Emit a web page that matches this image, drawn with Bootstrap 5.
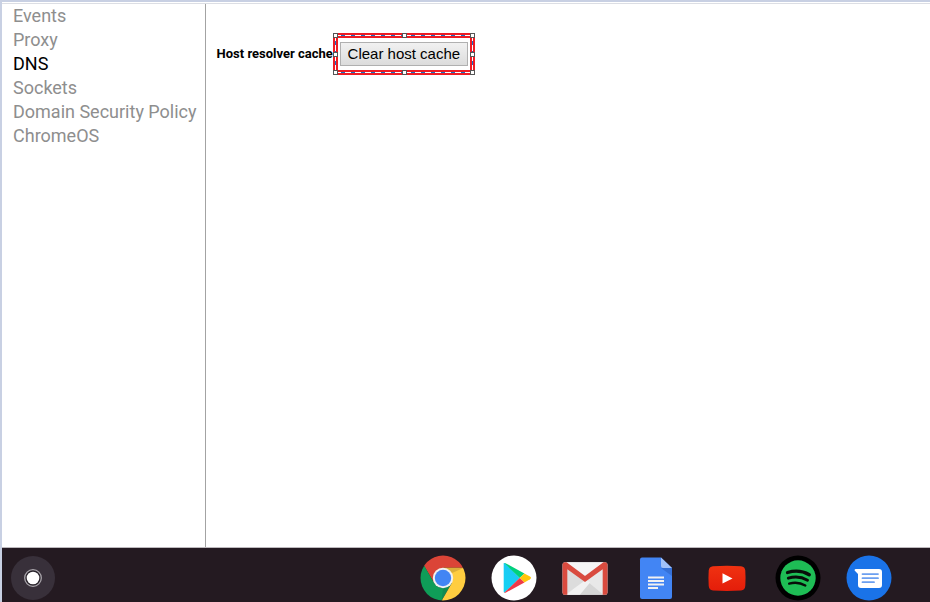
<!DOCTYPE html>
<html lang="en">
<head>
<meta charset="utf-8">
<meta name="viewport" content="width=device-width, initial-scale=1">
<title>DNS</title>
<link href="https://cdn.jsdelivr.net/npm/bootstrap@5.3.0/dist/css/bootstrap.min.css" rel="stylesheet">
<style>
body { font-family: Roboto, "Liberation Sans", sans-serif; border-left: 2px solid #c8d0e3; border-top: 2px solid #c8d0e3; background: #fff; }
.workspace { border-top: 1px solid #fff; }
.workspace-inner { border-top: 1px solid #dcdee4; }
.side { border-right: 1px solid #a3a3a3; padding: 0 8px 0 11px; }
.side .nav-link { padding: 0; font-size: 18px; line-height: 24px; color: #8e8e8e; white-space: nowrap; }
.side .nav-link.active { color: #000; }
.content { padding: 29px 11px; }
.host-label { font-size: 13px; line-height: 20px; font-weight: 700; color: #000; width: 116px; white-space: nowrap; }
.marquee { border: 5px solid #ed1c24; padding: 4px 2px; }
.clear-btn { font-family: "Liberation Sans", Arial, sans-serif; font-size: 15px; line-height: 22px; color: #000; padding: 0 7px; border: 1px solid #b0b0b0; border-radius: 0; background: linear-gradient(#f1f1f1, #dcdcdc); white-space: nowrap; }
.dashes {
  --h: repeating-linear-gradient(90deg, #fff 0 6px, #176fc8 6px 10px);
  --v: repeating-linear-gradient(#fff 0 6px, #176fc8 6px 10px);
  position: absolute; inset: -3px; pointer-events: none;
  background: var(--h) top / 100% 1px no-repeat, var(--h) bottom / 100% 1px no-repeat, var(--v) left / 1px 100% no-repeat, var(--v) right / 1px 100% no-repeat;
}
.knob { position: absolute; width: 5px; height: 5px; background: #fff; border: 1px solid #555; }
.l { left: -2px; } .c { left: calc(50% - 2px); } .r { right: -2px; }
.t { top: -2px; } .m { top: calc(50% - 2px); } .b { bottom: -2px; }
.shelf { background: #241a21; border-top: 1px solid #bdb9bd; padding: 7px 0 1px 8px; }
.apps { gap: 25px; padding-right: 38px; }
.app { padding: 0; border: 0; background: none; line-height: 0; border-radius: 0; }
.app svg { width: 46px; height: 46px; }
</style>
<script src="https://cdn.jsdelivr.net/npm/bootstrap@5.3.0/dist/js/bootstrap.bundle.min.js"></script>
</head>
<body class="min-vh-100 d-flex flex-column">
<div class="workspace flex-grow-1 d-flex">
<div class="workspace-inner flex-grow-1 d-flex">
  <nav class="side" aria-label="Sections">
    <div class="nav flex-column">
      <a class="nav-link" href="#events">Events</a>
      <a class="nav-link" href="#proxy">Proxy</a>
      <a class="nav-link active" href="#dns" aria-current="page">DNS</a>
      <a class="nav-link" href="#sockets">Sockets</a>
      <a class="nav-link" href="#policy">Domain Security Policy</a>
      <a class="nav-link" href="#chromeos">ChromeOS</a>
    </div>
  </nav>
  <main class="content flex-grow-1">
    <div class="d-flex align-items-center">
      <span class="host-label" id="hostLabel">Host resolver cache</span>
      <div class="marquee position-relative bg-white">
        <button type="button" class="clear-btn d-block" aria-describedby="hostLabel">Clear host cache</button>
        <div class="dashes">
          <i class="knob l t"></i><i class="knob c t"></i><i class="knob r t"></i>
          <i class="knob l m"></i><i class="knob r m"></i>
          <i class="knob l b"></i><i class="knob c b"></i><i class="knob r b"></i>
        </div>
      </div>
    </div>
  </main>
</div>
</div>
<footer class="shelf d-flex justify-content-between">
  <button type="button" class="app" aria-label="Launcher"><svg viewBox="0 0 46 46"><circle cx="23" cy="23" r="22" fill="#38303a"/><circle cx="23" cy="23" r="8.3" fill="#29232b" stroke="#a9a5ab" stroke-width="1.3"/><circle cx="23" cy="23" r="6.3" fill="#fff"/></svg></button>
  <div class="apps d-flex">
    <button type="button" class="app" aria-label="Chrome"><svg viewBox="0 0 46 46">
      <defs><clipPath id="cc"><circle cx="23" cy="23" r="22.5"/></clipPath></defs>
      <g clip-path="url(#cc)"><path fill="#db4437" d="M0 0H46V12.8H23L14.2 28.1 3 9z"/><path fill="#0f9d58" d="M3.5 9.5 14.2 28.1Q17.5 33.2 23 33.2L31.8 28.1 21.5 46H0V9z"/><path fill="#ffcd40" d="M23 12.8H46V46H21.5L31.8 28.1z"/><path fill="#3e2723" opacity=".18" d="M23 12.8H44L32 18z"/><path fill="#263238" opacity=".16" d="M31.8 28.1 21.5 46 23 33.2z"/></g>
      <circle cx="23" cy="23" r="10.2" fill="#f1f1f1"/><circle cx="23" cy="23" r="8.2" fill="#4285f4"/></svg></button>
    <button type="button" class="app" aria-label="Play Store"><svg viewBox="0 0 46 46">
      <defs><linearGradient id="pg" x1="1" x2="0" y2="1"><stop stop-color="#20c4f4"/><stop offset="1" stop-color="#13d3f3"/></linearGradient></defs>
      <circle cx="23" cy="23" r="22.5" fill="#fff"/><path fill="url(#pg)" d="M12.7 8.6Q12.7 7.6 14 8.3L28.7 23 14 37.3Q12.7 38 12.7 36.6z"/><path fill="#00d07c" d="M13.2 8Q14 7.8 15 8.4L33.4 18.4 28.7 23z"/><path fill="#ffc60a" d="M33.4 18.4 39 21.5Q41 22.8 39 24.3L33.4 27.5 28.7 23z"/><path fill="#ef3a49" d="M13.2 37.8 28.7 23 33.4 27.5 15 37.5Q14 38.1 13.2 37.8z"/></svg></button>
    <button type="button" class="app" aria-label="Gmail"><svg viewBox="0.5 0 45 45">
      <rect x="1" y="7" width="44" height="32" rx="2.5" fill="#e8e8e8"/><path fill="#d5d5d5" d="M5 39 23 24 41 39z"/><path fill="#f1f1f1" d="M6 38 23 23 28 27 18 39H5z"/><path fill="#dcdcdc" d="M5 13 23 25 5 38z"/><path fill="#f5f5f5" d="M4 7H42L23 20z"/><path fill="#d94b3f" d="M1 9.5Q1 7 3.5 7H5L23 20.5 41 7H42.5Q45 7 45 9.5V36.5Q45 39 42.5 39H40.3V14L23 26.5 5.7 14V39H3.5Q1 39 1 36.5z"/></svg></button>
    <button type="button" class="app" aria-label="Docs"><svg viewBox="0 0 46 46">
      <path fill="#4285f4" d="M9 2.5H28L39 13V42Q39 44 37 44H9Q7 44 7 42V4.500Q7 2.500 9 2.500z"/><path fill="#3571d8" d="M28 13H39V21z"/><path fill="#a1c2fa" d="M28 2.500 39 13H30Q28 13 28 11z"/><path stroke="#f1f1f1" stroke-width="1.8" d="M15 22.500H31M15 26H31M15 29.500H31M15 33H25"/></svg></button>
    <button type="button" class="app" aria-label="YouTube"><svg viewBox="0 0 46 46">
      <defs><linearGradient id="yg" x2="0" y2="1"><stop stop-color="#f03211"/><stop offset="1" stop-color="#e41d0a"/></linearGradient></defs>
      <g transform="translate(0 .8)"><path fill="url(#yg)" d="M9 10.4Q23 9.6 37 10.4Q41 10.7 41.3 15Q41.8 22.5 41.3 30Q41 34.4 37 34.7Q23 35.5 9 34.7Q5 34.4 4.7 30Q4.2 22.5 4.7 15Q5 10.7 9 10.4z"/><path fill="#fff" d="M18.5 17.5 28.5 22.6 18.5 27.7z"/></g></svg></button>
    <button type="button" class="app" aria-label="Spotify"><svg viewBox="0 0 46 46">
      <circle cx="23" cy="23" r="22.5" fill="#000"/><circle cx="23" cy="23" r="17.7" fill="#1ebd55"/><g fill="none" stroke="#080d09" stroke-linecap="round"><path stroke-width="3.3" d="M12.5 17.5Q24.5 14 34.3 19.7"/><path stroke-width="2.9" d="M13.3 23.2Q23.8 20.2 32.5 25.2"/><path stroke-width="2.4" d="M14.2 28.6Q23 26.2 30.3 30.5"/></g></svg></button>
    <button type="button" class="app" aria-label="Messages"><svg viewBox="0 0 46 46">
      <circle cx="23" cy="23" r="22.5" fill="#1a73e8"/><g transform="translate(0 .6)"><path fill="#fff" d="M10 13.500H33Q36 13.500 36 16.500V29.500Q36 32.500 33 32.500H15Q12 32.500 12 29.500V18.500L8.600 14.800Q8.300 13.500 10 13.500z"/><path stroke="#6b9ff0" stroke-width="1.8" stroke-linecap="round" d="M16.500 18.500H32M16.500 22.600H32M16.500 26.600H28"/></g></svg></button>
  </div>
</footer>
</body>
</html>
